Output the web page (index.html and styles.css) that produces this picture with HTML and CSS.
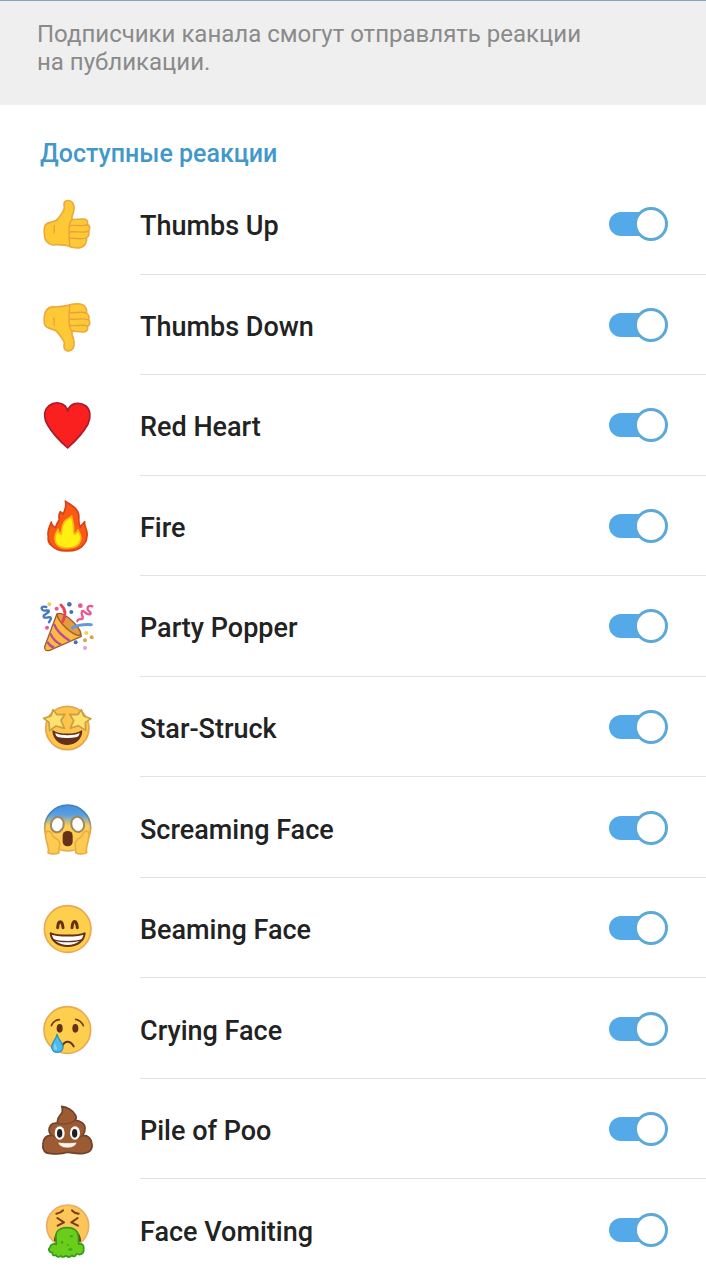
FILE: index.html
```
<!DOCTYPE html>
<html lang="ru">
<head>
	<meta charset="UTF-8">
	<meta name="viewport" content="width=device-width, initial-scale=1">
	<title>Реакции</title>
	<link rel="stylesheet" href="styles.css">
</head>

<body>
<p class="hint">Подписчики канала смогут отправлять реакции на публикации.</p>

<h2 class="title">Доступные реакции</h2>
<ul class="reactions">
	<li>
		<svg class="emoji" viewBox="21 12 180 180" aria-hidden="true">
			<path fill="#fdca36" stroke="#eea83f" stroke-width="5" stroke-linejoin="round" d="M46 105C54 94 74 99 84 86C94 74 102 65 103 53L102 42C103 30 120 27 129 40C136 53 131 67 126 79L126 89L159 87C168 87 173 91 173 98L172 104C180 106 181 116 176 124C178 131 176 139 170 143C171 154 166 170 151 173C136 176 121 172 109 166C93 164 79 163 68 165C56 163 44 155 43 133C42 119 43 111 46 105Z"/>
			<path fill="none" stroke="#ea9f3c" stroke-width="4" stroke-linecap="round" d="M125 90C117 96 118 110 117 122C118 139 116 154 120 166M73 107C70 112 76 121 71 129M121 107C136 103 157 111 172 104M122 126C137 123 159 130 175 124M120 145C137 143 153 150 169 144"/>
		</svg>
		<label for="r1">Thumbs Up</label>
		<input type="checkbox" id="r1" checked>
	</li>
	<li>
		<svg class="emoji" viewBox="21 315 180 180" aria-hidden="true">
			<path fill="#fdca36" stroke="#eea83f" stroke-width="5" stroke-linejoin="round" d="M46 407C54 420 74 413 84 429C94 442 102 450 103 459L102 470C103 484 120 488 129 475C136 461 132 448 126 434L126 423L159 426C168 426 173 422 173 414L172 409C180 407 181 397 176 389C178 382 176 374 170 370C171 358 166 345 151 342C136 340 121 343 109 347C93 350 79 353 68 350C56 352 44 360 43 380C42 394 43 402 46 407Z"/>
			<path fill="none" stroke="#ea9f3c" stroke-width="4" stroke-linecap="round" d="M125 422C117 416 118 402 117 390C118 374 116 360 120 347M73 405C70 400 76 391 71 384M121 406C136 410 157 402 172 408M122 387C137 390 159 383 175 389M120 368C137 370 153 363 169 369"/>
		</svg>
		<label for="r2">Thumbs Down</label>
		<input type="checkbox" id="r2" checked>
	</li>
	<li>
		<svg class="emoji" viewBox="21 1 180 180" aria-hidden="true">
			<path fill="#fb2020" stroke="#a91c29" stroke-width="5" stroke-linejoin="round" d="M113 49C107 23 76 18 56 34C38 50 43 76 53 91C69 119 95 144 113 160C134 141 159 116 174 88C183 68 182 46 168 34C147 19 120 25 113 49Z"/>
		</svg>
		<label for="r3">Red Heart</label>
		<input type="checkbox" id="r3" checked>
	</li>
	<li>
		<svg class="emoji" viewBox="21 303 180 180" aria-hidden="true">
			<path fill="#fb5914" stroke="#d7421a" stroke-width="5" stroke-linejoin="round" d="M106 318C118 329 142 335 146 358C148 371 143 383 151 397C153 390 160 386 164 380C161 398 177 405 170 428C171 441 164 444 159 451C149 465 127 468 113 468C90 469 73 462 64 451C57 445 53 436 55 424C50 406 60 393 64 381C64 391 70 395 77 398C79 387 84 380 88 374C86 365 87 356 91 350C94 352 97 355 99 358C107 342 110 331 106 318Z"/>
			<path fill="#fff011" stroke="#fdb813" stroke-width="5" stroke-linejoin="round" d="M125 363C126 376 131 387 131 399C131 407 130 414 134 418C139 416 141 409 144 404C147 416 157 423 151 438C145 455 128 459 113 459C93 460 76 451 75 431C73 418 81 411 84 403C85 411 88 416 94 418C96 399 96 388 105 378C111 371 119 371 125 363Z"/>
		</svg>
		<label for="r4">Fire</label>
		<input type="checkbox" id="r4" checked>
	</li>
	<li>
		<svg class="emoji" viewBox="21 5 180 180" aria-hidden="true">
			<path fill="#fdb944" stroke="#98602f" stroke-width="4" stroke-linejoin="round" d="M81 58L45 154C41 166 47 171 59 168L154 126C150 100 110 58 81 58Z"/>
			<path fill="none" stroke="#b44e99" stroke-width="7" d="M72 89C78 105 93 123 119 139M61 117C67 132 79 144 93 151M52 142C56 150 62 156 72 160"/>
			<ellipse cx="117" cy="90" rx="46" ry="14" transform="rotate(43 117 90)" fill="#e39a40" stroke="#98602f" stroke-width="4"/>
			<path fill="none" stroke="#e94355" stroke-width="9" stroke-linecap="round" d="M93 32C106 44 109 61 98 82"/>
			<path fill="none" stroke="#6599db" stroke-width="9" stroke-linecap="round" d="M127 101C143 91 161 90 184 91"/>
			<path fill="none" stroke="#4777c2" stroke-width="7" stroke-linecap="round" stroke-linejoin="round" d="M49 38C35 35 32 41 37 46C44 54 60 42 56 53C50 60 36 61 42 69C50 74 63 62 63 73L57 84"/>
			<path fill="none" stroke="#e9588e" stroke-width="7" stroke-linecap="round" stroke-linejoin="round" d="M187 36C179 33 171 36 173 45C175 52 187 55 180 60C167 63 161 45 156 51C150 60 164 70 156 74C149 75 144 73 142 80"/>
			<g fill="#e9588e"><circle cx="80" cy="43" r="6"/><circle cx="151" cy="34" r="7"/><circle cx="51" cy="100" r="6"/></g>
			<g fill="#466fb9"><circle cx="118" cy="30" r="7"/><circle cx="124" cy="53" r="6"/><circle cx="137" cy="144" r="6"/></g>
			<g fill="#efcf5c"><circle cx="58" cy="30" r="6"/><circle cx="169" cy="116" r="6"/></g>
			<g fill="#dba350"><circle cx="185" cy="129" r="6"/><circle cx="165" cy="138" r="6"/></g>
			<circle cx="165" cy="161" r="6" fill="#e69ed1"/>
		</svg>
		<label for="r5">Party Popper</label>
		<input type="checkbox" id="r5" checked>
	</li>
	<li>
		<svg class="emoji" viewBox="21 306 180 180" aria-hidden="true">
			<circle cx="112" cy="399" r="65" fill="#fec44c" stroke="#e6a650" stroke-width="5"/>
			<path fill="#653019" stroke="#653019" stroke-width="4" stroke-linejoin="round" d="M69 408C84 421 139 421 155 408C154 430 137 447 113 448C87 447 71 431 69 408Z"/>
			<path fill="#fff" d="M76 414C94 423 132 423 149 414C147 422 145 424 141 426C122 430 101 430 83 426C79 424 76 420 76 414Z"/>
			<path fill="#ffe171" stroke="#c7a044" stroke-width="5" stroke-linejoin="round" d="M69 344L81 359L105 358L93 376L103 400L78 393L59 407L57 382L41 370L63 363ZM154 344L143 359L119 358L131 377L121 400L145 392L167 406L166 382L183 371L161 363Z"/>
		</svg>
		<label for="r6">Star-Struck</label>
		<input type="checkbox" id="r6" checked>
	</li>
	<li>
		<svg class="emoji" viewBox="21 8 180 180" aria-hidden="true">
			<defs>
				<linearGradient id="scared" x1="0" y1="0" x2="0" y2="1">
					<stop offset="0" stop-color="#448fdf"/>
					<stop offset=".22" stop-color="#5aa0df"/>
					<stop offset=".45" stop-color="#fecd52"/>
					<stop offset="1" stop-color="#fecd52"/>
				</linearGradient>
				<linearGradient id="scaredLine" x1="0" y1="0" x2="0" y2="1">
					<stop offset=".2" stop-color="#3f7fc4"/>
					<stop offset=".6" stop-color="#e8a94a"/>
				</linearGradient>
			</defs>
			<circle cx="113" cy="98" r="69" fill="url(#scared)" stroke="url(#scaredLine)" stroke-width="5"/>
			<path fill="#fdcb50" stroke="#eaac48" stroke-width="5" stroke-linejoin="round" d="M47 112C53 103 63 108 67 119C72 130 83 128 88 139C92 150 85 155 87 172C77 178 61 176 54 172C60 156 44 136 47 112ZM177 112C170 103 161 108 157 119C152 130 143 128 137 139C133 150 139 156 137 172C147 178 163 177 170 172C165 156 179 136 177 112Z"/>
			<g fill="#fff" stroke="#9b8961" stroke-width="6">
				<ellipse cx="82" cy="88" rx="19" ry="23" transform="rotate(15 82 88)"/>
				<ellipse cx="143" cy="87" rx="19" ry="23" transform="rotate(-15 143 87)"/>
			</g>
			<rect x="98" y="107" width="30" height="46" rx="14" fill="#64301a"/>
		</svg>
		<label for="r7">Screaming Face</label>
		<input type="checkbox" id="r7" checked>
	</li>
	<li>
		<svg class="emoji" viewBox="21 310 180 180" aria-hidden="true">
			<circle cx="113" cy="403" r="70" fill="#fece4d" stroke="#e9a955" stroke-width="5"/>
			<path fill="none" stroke="#643017" stroke-width="9" stroke-linecap="round" stroke-linejoin="round" d="M83 399C84 375 97 375 99 399M126 399C128 374 140 375 142 399"/>
			<path fill="#fff" stroke="#643017" stroke-width="6" stroke-linejoin="round" d="M62 416C84 425 143 425 164 416C162 438 142 454 113 454C84 454 64 438 62 416Z"/>
			<path fill="none" stroke="#643017" stroke-width="4" d="M67 434C91 443 134 443 159 434"/>
		</svg>
		<label for="r8">Beaming Face</label>
		<input type="checkbox" id="r8" checked>
	</li>
	<li>
		<svg class="emoji" viewBox="21 -4 180 180" aria-hidden="true">
			<circle cx="112" cy="89" r="70" fill="#fece4d" stroke="#e9a955" stroke-width="5"/>
			<g fill="#643017"><ellipse cx="89" cy="84" rx="9" ry="13"/><ellipse cx="136" cy="84" rx="9" ry="13"/></g>
			<path fill="none" stroke="#743c1c" stroke-width="5" stroke-linecap="round" d="M64 76C69 65 77 59 88 58M137 57C149 59 155 65 160 76"/>
			<path fill="none" stroke="#643017" stroke-width="6" stroke-linecap="round" d="M96 138C105 120 120 120 131 138"/>
			<path fill="#4abdf0" stroke="#378fb8" stroke-width="4" stroke-linejoin="round" d="M81 102C79 117 65 125 65 140C65 150 73 156 82 156C92 156 100 149 99 138C97 125 84 117 81 102Z"/>
			<path fill="#7fd5f8" d="M76 128C70 137 71 148 79 149C85 145 76 138 76 128Z"/>
		</svg>
		<label for="r9">Crying Face</label>
		<input type="checkbox" id="r9" checked>
	</li>
	<li>
		<svg class="emoji" viewBox="21 298 180 180" aria-hidden="true">
			<path fill="#9c5b32" stroke="#70432a" stroke-width="5" stroke-linejoin="round" d="M95 320C111 322 130 332 137 347C140 354 137 360 134 362C151 361 166 374 165 386C166 397 161 403 158 407C175 407 184 416 186 434C188 449 178 460 161 461C134 464 125 457 112 458C96 464 73 463 57 461C44 461 36 448 39 433C40 415 51 407 64 407C52 395 56 371 76 370C83 371 83 371 82 366C81 344 105 347 95 320Z"/>
			<path fill="none" stroke="#7e4828" stroke-width="4" stroke-linecap="round" d="M85 371C99 376 126 372 134 362M66 407C72 411 77 414 82 415M158 407C153 411 149 414 144 415"/>
			<g fill="#fff"><ellipse cx="89" cy="400" rx="15" ry="20"/><ellipse cx="135" cy="400" rx="15" ry="20"/></g>
			<g fill="#231f20"><ellipse cx="89" cy="401" rx="8" ry="13"/><ellipse cx="134" cy="401" rx="8" ry="13"/></g>
			<path fill="#fff4e8" stroke="#814a2b" stroke-width="2" d="M83 427C98 430 128 430 141 427C137 451 88 451 83 427Z"/>
		</svg>
		<label for="r10">Pile of Poo</label>
		<input type="checkbox" id="r10" checked>
	</li>
	<li>
		<svg class="emoji" viewBox="21 14 180 180" aria-hidden="true">
			<circle cx="113" cy="92" r="63" fill="#fdc659" stroke="#e9ad68" stroke-width="5"/>
			<path fill="none" stroke="#783c1b" stroke-width="6" stroke-linecap="round" stroke-linejoin="round" d="M79 55Q92 53 99 45M126 45Q132 53 146 55M82 68L102 81L83 91M143 68L124 81L144 91"/>
			<path fill="#693217" d="M72 138C70 87 154 83 153 139Z"/>
			<path fill="#69cd19" stroke="#35991e" stroke-width="5" stroke-linejoin="round" d="M79 147C80 132 73 118 83 107C95 94 126 93 138 106C150 118 144 132 146 147C157 143 163 151 161 160C163 170 158 177 148 178C144 178 142 173 139 176C137 184 130 186 126 180C119 187 113 186 108 181C102 186 96 187 92 181C87 187 80 186 78 179C69 183 67 178 67 172C56 172 54 161 60 155C62 148 71 143 79 147Z"/>
			<g fill="#3dad25"><ellipse cx="124" cy="123" rx="5" ry="4"/><ellipse cx="96" cy="141" rx="4" ry="5"/><ellipse cx="121" cy="162" rx="6" ry="5"/><circle cx="113" cy="149" r="3"/></g>
		</svg>
		<label for="r11">Face Vomiting</label>
		<input type="checkbox" id="r11" checked>
	</li>
</ul>
</body>
</html>
```
FILE: styles.css
```
* { margin:0; padding:0; box-sizing:border-box;}
body { display:flex; flex-direction:column; min-height:100vh; background:#fff; color:#222; font-family:Roboto, "Noto Sans", sans-serif;}

.hint { padding:19px 100px 29px 37px; border-top:1px solid #84a3c4; background:#efefef; color:#8a8a8a; font-size:24px; line-height:28px;}
.title { padding:34px 40px 5px; color:#4298cb; font-size:25px; line-height:30px; font-weight:500;}

.reactions { flex:1; display:grid; grid-auto-rows:minmax(100px, 1fr); list-style:none;}
.reactions li { display:flex; align-items:center; padding:0 38px 0 37px; position:relative;}
.reactions .emoji { flex:none; width:60px; height:60px; margin-right:43px;}
.reactions label { flex:1; padding-top:4px; font-size:27px; line-height:32px; font-weight:500;}

/* divider starts under the label */
.reactions li::after { content:""; position:absolute; left:140px; right:0; bottom:0; height:1px; background:#e2e2e2;}
.reactions li:last-child::after { display:none;}

/* switch */
.reactions input { flex:none; appearance:none; width:59px; height:34px; position:relative; cursor:pointer;}
.reactions input::before { content:""; position:absolute; left:0; top:5px; width:50px; height:24px; border-radius:12px; background:#b5bcc2;}
.reactions input::after { content:""; position:absolute; left:0; top:0; width:34px; height:34px; box-sizing:border-box; border:3px solid #b5bcc2; border-radius:50%; background:#fff;}
.reactions input:checked::before { background:#54a9e8;}
.reactions input:checked::after { left:25px; border-color:#5ba8d9;}
```
